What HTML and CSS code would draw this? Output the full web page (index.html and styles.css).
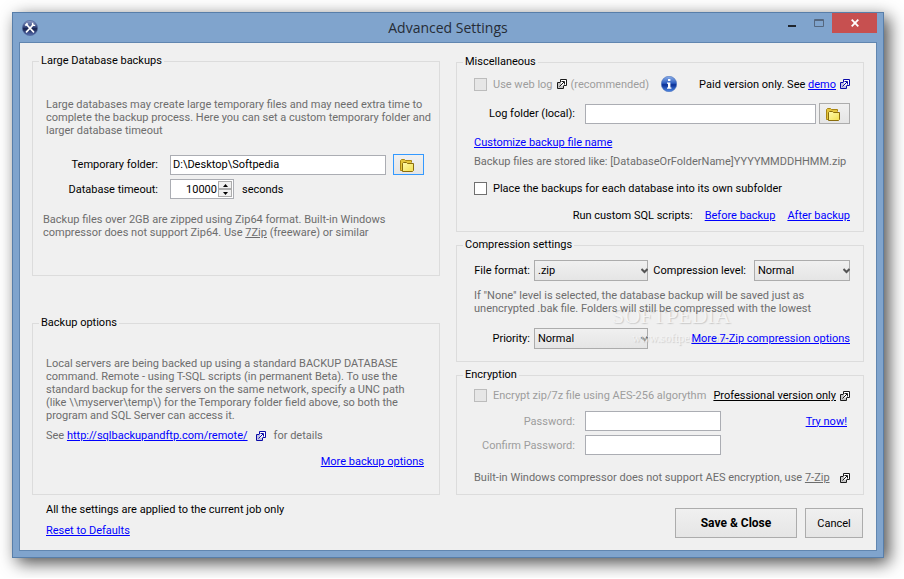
FILE: index.html
```html
<!DOCTYPE html>
<html lang="en">
<head>
  <meta charset="UTF-8" />
  <meta name="viewport" content="width=device-width, initial-scale=1.0" />
  <title>Advanced Settings</title>
  <link rel="stylesheet" href="styles.css">
</head>
<body>
  <svg class="defs" width="0" height="0" aria-hidden="true">
    <defs>
      <linearGradient id="ballFill" x1="0" y1="0" x2="0" y2="1">
        <stop offset="0" stop-color="#8d9cc8" />
        <stop offset="0.45" stop-color="#34457c" />
        <stop offset="0.55" stop-color="#15204c" />
        <stop offset="1" stop-color="#5a72b4" />
      </linearGradient>
      <linearGradient id="infoFill" x1="0" y1="0" x2="0" y2="1">
        <stop offset="0" stop-color="#8fb2ea" />
        <stop offset="0.45" stop-color="#2c5cc0" />
        <stop offset="0.55" stop-color="#0a2f96" />
        <stop offset="1" stop-color="#4f8ae6" />
      </linearGradient>
      <linearGradient id="folderFill" x1="0" y1="0" x2="1" y2="1">
        <stop offset="0" stop-color="#fffbb0" />
        <stop offset="1" stop-color="#f2df4e" />
      </linearGradient>
      <symbol id="folder" viewBox="0 0 14 13">
        <path d="M0.5 11.5V1.5L1.5 0.5H4.5L5.5 1.5H11.5V3.5" fill="#e3c53c" stroke="#a98512" />
        <path d="M0.5 11.5H2.5V4.5" fill="#e3c53c" stroke="#a98512" />
        <path d="M2.5 12.5V4.5L3.5 3.5H6.5L7.5 4.5H13.5V11.5L12.5 12.5Z" fill="url(#folderFill)" stroke="#8a6d0c" />
      </symbol>
      <symbol id="external" viewBox="0 0 10 10">
        <path d="M3.5 3.5V0.5H9.5V6.5H6.5" fill="#fff" stroke="currentColor" />
        <path d="M3 3.5H0.5V9.5H6.5V7" fill="none" stroke="currentColor" />
        <path d="M1 4H4V7H6V9H1Z" fill="currentColor" opacity="0.2" />
        <path d="M4.5 2.5H7.5V5.5M7 3L2.5 7.5" fill="none" stroke="currentColor" />
      </symbol>
      <symbol id="chevron" viewBox="0 0 7 6">
        <path d="M0.5 1L3.5 4L6.5 1" fill="none" stroke="#555" stroke-width="2" />
      </symbol>
    </defs>
  </svg>

  <div class="window">
    <header class="title-bar">
      <svg class="app-icon" viewBox="0 0 16 16" aria-hidden="true">
        <circle cx="8" cy="8" r="7.6" fill="url(#ballFill)" stroke="#4c5f95" stroke-width="0.6" />
        <path d="M4.5 4.5L11.5 11.8M11 5L4.5 11.8" stroke="#fff" stroke-width="1.7" stroke-linecap="round" />
        <path d="M3.4 5.6L5.6 3.4" stroke="#fff" stroke-width="1.8" />
        <path d="M10.6 2.8V5.4H13.2" fill="none" stroke="#fff" stroke-width="1.4" />
      </svg>
      <h1>Advanced Settings</h1>
      <div class="window-buttons">
        <button type="button" class="win-btn" aria-label="Minimize">
          <svg width="8" height="10" viewBox="0 0 8 10"><path d="M0 7H8V9H0Z" fill="#1f252d" /></svg>
        </button>
        <button type="button" class="win-btn" aria-label="Maximize" disabled>
          <svg width="10" height="8" viewBox="0 0 10 8"><path d="M0.5 0.5H9.5V7.5H0.5ZM0 1.5H10" fill="none" stroke="#55677f" /></svg>
        </button>
        <button type="button" class="win-btn close" aria-label="Close">
          <svg width="8" height="8" viewBox="0 0 8 8"><path d="M0.7 0.7L7.3 7.3M7.3 0.7L0.7 7.3" stroke="#fff" stroke-width="1.8" /></svg>
        </button>
      </div>
    </header>

    <form class="client">
      <div class="columns">
        <div class="column left">
          <fieldset>
            <legend>Large Database backups</legend>
            <div class="group large-db">
              <p class="hint">Large databases may create large temporary files and may need extra time to<br>complete the backup process. Here you can set a custom temporary folder and<br>larger database timeout</p>
              <div class="row folder-row">
                <label for="tempFolder">Temporary folder:</label>
                <input type="text" id="tempFolder" class="grow" value="D:\Desktop\Softpedia" />
                <button type="button" class="browse focused" aria-label="Browse"><svg width="14" height="13"><use href="#folder" /></svg></button>
              </div>
              <div class="row timeout-row">
                <label for="timeout">Database timeout:</label>
                <span class="spin">
                  <input type="text" inputmode="numeric" id="timeout" value="10000" />
                  <span class="spin-buttons">
                    <button type="button" aria-label="Increase"><svg width="5" height="3" viewBox="0 0 5 3"><path d="M0 3L2.5 0L5 3Z" /></svg></button>
                    <button type="button" aria-label="Decrease"><svg width="5" height="3" viewBox="0 0 5 3"><path d="M0 0L2.5 3L5 0Z" /></svg></button>
                  </span>
                </span>
                <span>seconds</span>
              </div>
              <p class="hint zip-note">Backup files over 2GB are zipped using Zip64 format. Built-in Windows<br>compressor does not support Zip64. Use <a href="#" class="muted">7Zip</a> (freeware) or similar</p>
            </div>
          </fieldset>

          <fieldset>
            <legend>Backup options</legend>
            <div class="group backup-options">
              <p class="hint">Local servers are being backed up using a standard BACKUP DATABASE<br>command. Remote - using T-SQL scripts (in permanent Beta). To use the<br>standard backup for the servers on the same network, specify a UNC path<br>(like \\myserver\temp\) for the Temporary folder field above, so both the<br>program and SQL Server can access it.</p>
              <p class="row hint see-row">
                <span>See <a href="#">http://sqlbackupandftp.com/remote/</a></span>
                <svg class="ext blue" width="10" height="10"><use href="#external" /></svg>
                <span>for details</span>
              </p>
              <p class="more"><a href="#">More backup options</a></p>
            </div>
          </fieldset>
        </div>

        <div class="column right">
          <fieldset>
            <legend>Miscellaneous</legend>
            <div class="group misc">
              <div class="row web-log">
                <input type="checkbox" id="webLog" disabled />
                <label for="webLog" class="disabled">Use web log</label>
                <svg class="ext log-ext" width="10" height="10"><use href="#external" /></svg>
                <span class="disabled">(recommended)</span>
                <svg class="info" width="16" height="16" viewBox="0 0 16 16" role="img" aria-label="Info">
                  <circle cx="8" cy="8" r="7.7" fill="url(#infoFill)" stroke="#4a6fb8" stroke-width="0.6" />
                  <path d="M7 3H9.4V5H7ZM6 6.4H9.4V11.4H10.4V12.8H6V11.4H7V7.8H6Z" fill="#fff" />
                </svg>
                <span class="push">Paid version only. See <a href="#">demo</a></span>
                <svg class="ext blue" width="10" height="10"><use href="#external" /></svg>
              </div>
              <div class="row log-folder">
                <label for="logFolder">Log folder (local):</label>
                <input type="text" id="logFolder" class="grow" />
                <button type="button" class="browse" aria-label="Browse"><svg width="14" height="13"><use href="#folder" /></svg></button>
              </div>
              <p class="customize"><a href="#">Customize backup file name</a></p>
              <p class="hint stored">Backup files are stored like: [DatabaseOrFolderName]YYYYMMDDHHMM.zip</p>
              <div class="row subfolder">
                <input type="checkbox" id="subfolder" />
                <label for="subfolder">Place the backups for each database into its own subfolder</label>
              </div>
              <div class="row scripts">
                <span>Run custom SQL scripts:</span>
                <a href="#">Before backup</a>
                <a href="#">After backup</a>
              </div>
            </div>
          </fieldset>

          <fieldset>
            <legend>Compression settings</legend>
            <div class="group compression">
              <div class="row">
                <label for="format" class="short">File format:</label>
                <span class="select wide">
                  <select id="format"><option>.zip</option><option>.7z</option></select>
                  <svg width="7" height="6"><use href="#chevron" /></svg>
                </span>
                <label for="level" class="push">Compression level:</label>
                <span class="select">
                  <select id="level"><option>Normal</option><option>None</option></select>
                  <svg width="7" height="6"><use href="#chevron" /></svg>
                </span>
              </div>
              <p class="hint">If "None" level is selected, the database backup will be saved just as<br>unencrypted .bak file. Folders will still be compressed with the lowest</p>
              <div class="row priority">
                <label for="priority" class="short">Priority:</label>
                <span class="select wide">
                  <select id="priority"><option>Normal</option><option>Low</option></select>
                  <svg width="7" height="6"><use href="#chevron" /></svg>
                </span>
                <a href="#" class="push">More 7-Zip compression options</a>
              </div>
              <div class="watermark" aria-hidden="true">
                <b>SOFTPEDIA</b>
                <span>www.softpedia.com</span>
              </div>
            </div>
          </fieldset>

          <fieldset>
            <legend>Encryption</legend>
            <div class="group encryption">
              <div class="row encrypt">
                <input type="checkbox" id="encrypt" disabled />
                <label for="encrypt" class="disabled">Encrypt zip/7z file using AES-256 algorythm</label>
                <a href="#" class="black push">Professional version only</a>
                <svg class="ext" width="10" height="10"><use href="#external" /></svg>
              </div>
              <div class="row password">
                <label for="password" class="disabled">Password:</label>
                <input type="password" id="password" />
                <a href="#" class="push try">Try now!</a>
              </div>
              <div class="row password confirm">
                <label for="confirm" class="disabled">Confirm Password:</label>
                <input type="password" id="confirm" />
              </div>
              <p class="row hint aes-note">
                <span>Built-in Windows compressor does not support AES encryption, use <a href="#" class="muted">7-Zip</a></span>
                <svg class="ext push" width="10" height="10"><use href="#external" /></svg>
              </p>
            </div>
          </fieldset>
        </div>
      </div>

      <footer class="footer">
        <div class="footer-text">
          <p>All the settings are applied to the current job only</p>
          <p><a href="#">Reset to Defaults</a></p>
        </div>
        <button type="submit" class="btn save">Save &amp; Close</button>
        <button type="button" class="btn">Cancel</button>
      </footer>
    </form>
  </div>
</body>
</html>
```
FILE: styles.css
```css
* { box-sizing: border-box; }
body {
  margin: 0;
  padding: 12px 20px 20px 12px;
  background: #fff;
  font-family: Roboto, "Liberation Sans", Arial, sans-serif;
  font-size: 11px;
  line-height: 13px;
  color: #000;
  white-space: nowrap;
}
p { margin: 0; }
svg { display: block; flex: none; }
.defs { position: absolute; }
a { color: #0000ff; text-underline-offset: 1px; }
a.muted { color: #6d6d6d; }
a.black { color: #000; }
input, select, button {
  font: inherit;
  color: inherit;
  margin: 0;
  border-radius: 0;
}

/* window frame */
.window {
  background: #80a4cd;
  border: 1px solid #587ea9;
  padding: 0 6px 6px;
  box-shadow: 5px 5px 16px rgba(0, 0, 0, 0.7);
}
.title-bar {
  display: grid;
  grid-template-columns: 1fr auto 1fr;
  align-items: center;
  height: 29px;
}
.app-icon {
  width: 16px;
  height: 16px;
  margin-left: 3px;
}
h1 {
  margin: 0;
  font-family: "Open Sans", "Noto Sans", sans-serif;
  font-size: 14px;
  font-weight: normal;
  line-height: 29px;
  color: #262c36;
}
.window-buttons {
  display: flex;
  justify-content: flex-end;
  align-self: start;
}
.win-btn {
  display: flex;
  align-items: center;
  justify-content: center;
  width: 27px;
  height: 20px;
  padding: 0;
  border: none;
  background: none;
}
.win-btn.close {
  width: 45px;
  background: #c75050;
}
.client {
  border: 1px solid #6186b0;
  background: #f0f0f0;
  padding: 11px 12px 12px;
}

/* groups */
.columns {
  display: grid;
  grid-template-columns: repeat(2, minmax(0, 1fr));
  gap: 16px;
}
.column {
  display: flex;
  flex-direction: column;
  justify-content: space-between;
}
.column.right { padding-top: 1px; }
fieldset {
  min-width: 0;
  margin: 0;
  padding: 0 6px;
  border: 1px solid #dcdcdc;
}
.right fieldset + fieldset { margin-top: 6px; }
legend {
  padding: 0 2px;
  line-height: 14px;
}
.group { position: relative; }
.left .group { padding-right: 9px; }
.right .group { padding: 0 7px 0 11px; }
.hint { color: #6d6d6d; }
.disabled { color: #9d9d9d; }
.left .hint { padding-left: 7px; }
.row {
  display: flex;
  align-items: center;
}
.grow {
  flex: 1;
  min-width: 0;
}
.push { margin-left: auto; }

/* controls */
input[type="text"], input[type="password"] {
  height: 20px;
  padding: 0 2px;
  border: 1px solid #abadb3;
  background: #fff;
}
input[type="checkbox"] {
  appearance: none;
  flex: none;
  width: 13px;
  height: 13px;
  margin-right: 6px;
  border: 1px solid #707070;
  background: #fff;
}
input[type="checkbox"]:checked { background: #707070; }
input[type="checkbox"]:disabled {
  border-color: #bcbcbc;
  background: #e6e6e6;
}
.browse {
  display: flex;
  align-items: center;
  justify-content: center;
  width: 31px;
  height: 21px;
  padding: 2px 3px 0 0;
  border: 1px solid #acacac;
  background: linear-gradient(#f0f0f0, #e5e5e5);
}
.browse.focused { border-color: #3399ff; }
.spin {
  display: flex;
  width: 64px;
  height: 20px;
  padding: 1px;
  border: 1px solid #abadb3;
  background: #fff;
}
.spin input[type="text"] {
  flex: 1;
  min-width: 0;
  height: 16px;
  padding: 0 1px;
  border: none;
  text-align: right;
}
.spin-buttons {
  display: flex;
  flex-direction: column;
  width: 14px;
}
.spin-buttons button {
  display: flex;
  flex: 1;
  align-items: center;
  justify-content: center;
  padding: 0;
  border: 1px solid #acacac;
  background: #f0f0f0;
}
.select {
  position: relative;
  flex: none;
  width: 96px;
}
.select.wide { width: 114px; }
.select select {
  display: block;
  appearance: none;
  width: 100%;
  height: 21px;
  padding: 0 3px;
  border: 1px solid #acacac;
  background: linear-gradient(#f0f0f0, #e5e5e5);
}
.select svg {
  position: absolute;
  right: 0;
  top: 8px;
  pointer-events: none;
}
.ext {
  margin-left: 4px;
  color: #1a1a1a;
}
.ext.blue { color: #0a0aa8; }
.ext.push { margin-left: auto; }

/* large database backups */
.large-db {
  padding-top: 30px;
  padding-bottom: 36px;
}
.folder-row, .timeout-row { margin-top: 17px; }
.folder-row label, .timeout-row label {
  width: 119px;
  margin-right: 12px;
  text-align: right;
}
.folder-row .browse { margin-left: 7px; }
.timeout-row {
  gap: 0 8px;
  margin-top: 4px;
}
.timeout-row label { margin-right: 4px; }
.left .zip-note {
  margin-top: 14px;
  padding-left: 4px;
}

/* backup options */
.backup-options {
  padding-top: 27px;
  padding-bottom: 26px;
}
.see-row {
  gap: 8px;
  margin-top: 7px;
}
.see-row .ext { margin: 0; }
.more {
  margin-top: 13px;
  text-align: right;
}

/* miscellaneous */
.right .misc {
  padding-top: 5px;
  padding-bottom: 9px;
}
.web-log { height: 20px; }
.log-ext { margin-right: 4px; }
.info { margin-left: 12px; }
.log-folder { margin-top: 9px; }
.log-folder label, .password label {
  width: 101px;
  margin-right: 10px;
  text-align: right;
}
.log-folder .browse { margin-left: 3px; }
.customize { margin-top: 12px; }
.stored { margin-top: 6px; }
.subfolder { margin-top: 14px; }
.scripts {
  justify-content: flex-end;
  gap: 12px;
  margin-top: 14px;
}

/* compression settings */
.right .compression {
  padding-top: 8px;
  padding-bottom: 12px;
}
.short {
  width: 56px;
  margin-right: 4px;
  text-align: right;
}
.compression .push + .select { margin-left: 8px; }
.compression .hint { margin-top: 8px; }
.priority { margin-top: 13px; }
.watermark {
  position: absolute;
  left: 149px;
  top: 52px;
  color: #f6f6f6;
  text-shadow: 1px 1px 1px #bbb;
  font-family: "Liberation Serif", serif;
  opacity: 0.7;
  pointer-events: none;
}
.watermark b {
  display: block;
  font-size: 22px;
  font-weight: normal;
  line-height: 24px;
}
.watermark span {
  display: block;
  padding-left: 20px;
  font-size: 12px;
  line-height: 20px;
}

/* links and hints stay readable over the watermark */
.compression .hint, .compression a {
  position: relative;
  z-index: 1;
}

/* encryption */
.right .encryption {
  padding-top: 7px;
  padding-bottom: 10px;
}
.password { margin-top: 9px; }
.password input { width: 136px; }
.confirm { margin-top: 4px; }
.try { margin-right: 3px; }
.aes-note { margin-top: 16px; }

/* footer */
.footer {
  display: flex;
  gap: 8px;
  padding: 13px 1px 0 0;
}
.footer-text {
  flex: 1;
  display: flex;
  flex-direction: column;
  gap: 8px;
  padding: 0 0 0 14px;
  margin-top: -5px;
}
.btn {
  width: 58px;
  height: 30px;
  padding: 0;
  border: 1px solid #acacac;
  background: linear-gradient(#f0f0f0, #e5e5e5);
}
.btn.save {
  width: 122px;
  font-size: 12px;
  font-weight: bold;
}
```
